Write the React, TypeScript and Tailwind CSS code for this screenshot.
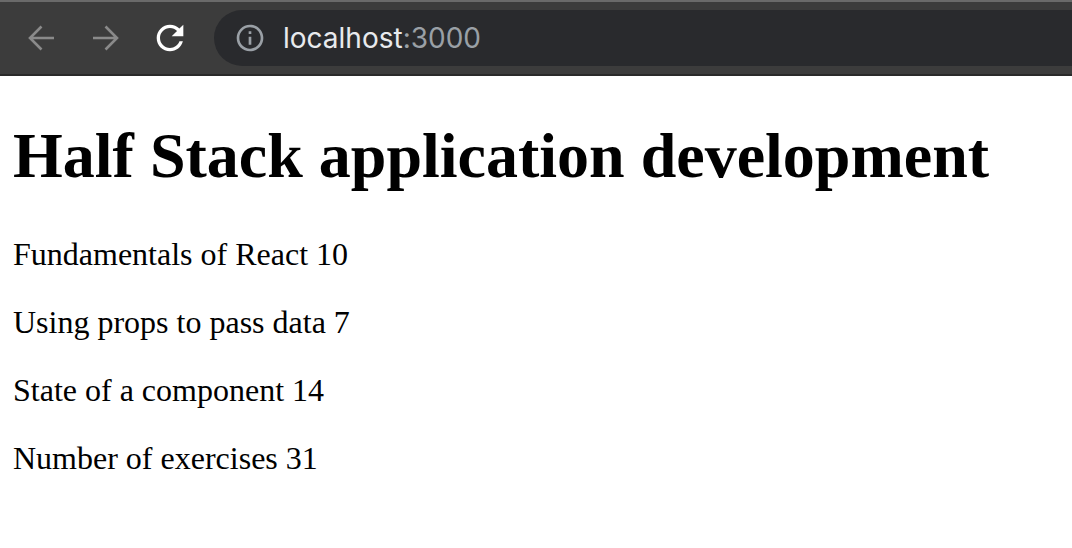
const parts = [
  { name: "Fundamentals of React", exercises: 10 },
  { name: "Using props to pass data", exercises: 7 },
  { name: "State of a component", exercises: 14 },
];

function BrowserBar() {
  return (
    <div className="flex flex-col">
      <div className="h-[2px] bg-[#6a6a6a]" />
      <div className="flex h-[72px] items-center bg-[#3c3c3c] pl-[27px]">
        <svg width="28" height="28" viewBox="0 0 28 28" fill="none" stroke="#8a8a8a" strokeWidth="2.6">
          <path d="M27 14H3M14.5 2.5L3 14l11.5 11.5" />
        </svg>
        <svg className="ml-[37px]" width="28" height="28" viewBox="0 0 28 28" fill="none" stroke="#8a8a8a" strokeWidth="2.6">
          <path d="M1 14h24M13.5 2.5L25 14 13.5 25.5" />
        </svg>
        <svg className="ml-[30px]" width="40" height="40" viewBox="0 0 24 24" fill="#ffffff">
          <path d="M17.65 6.35C16.2 4.9 14.21 4 12 4c-4.42 0-7.990 3.58-7.99 8s3.57 8 7.99 8c3.73 0 6.84-2.55 7.73-6h-2.08c-.82 2.33-3.04 4-5.65 4-3.31 0-6-2.690-6-6s2.69-6 6-6c1.66 0 3.14.69 4.22 1.78L13 11h7V4l-2.35 2.35z" />
        </svg>
        <div className="ml-[24px] flex h-[56px] flex-1 items-center rounded-l-full bg-[#292a2d] pl-[20px]">
          <svg width="32" height="32" viewBox="0 0 24 24" fill="#9aa0a6">
            <path d="M11 7h2v2h-2zm0 4h2v6h-2zm1-9C6.48 2 2 6.48 2 12s4.48 10 10 10 10-4.48 10-10S17.52 2 12 2zm0 18c-4.41 0-8-3.59-8-8s3.59-8 8-8 8 3.59 8 8-3.59 8-8 8z" />
          </svg>
          <span className="ml-[17px] font-['Inter',sans-serif] text-[28px] leading-none text-[#e8eaed]">
            localhost<span className="text-[#9aa0a6]">:3000</span>
          </span>
        </div>
      </div>
      <div className="h-[2px] bg-[#2a2a2a]" />
    </div>
  );
}

export default function App() {
  const total = parts.reduce((sum, p) => sum + p.exercises, 0);
  return (
    <div className="min-h-screen bg-white">
      <BrowserBar />
      <div className="pl-[13px] pr-4 font-['Liberation_Serif',serif] text-black">
        <h1 className="my-[43px] text-[64px] font-bold leading-[normal]">Half Stack application development</h1>
        {parts.map((p) => (
          <p key={p.name} className="my-8 text-[32px] leading-[36px]">
            {p.name} {p.exercises}
          </p>
        ))}
        <p className="my-8 text-[32px] leading-[36px]">Number of exercises {total}</p>
      </div>
    </div>
  );
}
